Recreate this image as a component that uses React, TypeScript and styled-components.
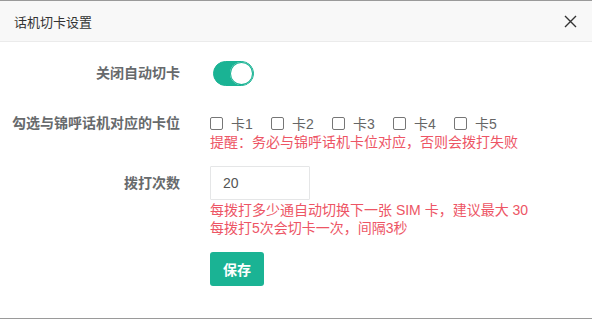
import { useState } from "react";
import styled, { createGlobalStyle } from "styled-components";

const GlobalStyle = createGlobalStyle`
  html, body {
    margin: 0;
    padding: 0;
    background: #fff;
  }
  body {
    font-family: "Liberation Sans", "Noto Sans CJK SC", sans-serif;
  }
`;

const green = "#1ab394";
const danger = "#ed5565";

const Modal = styled.div`
  width: 592px;
  height: 319px;
  box-sizing: border-box;
  border-top: 1px solid #9a9a9a;
  border-bottom: 1px solid #9a9a9a;
  background: #fff;
  display: flex;
  flex-direction: column;
`;

const Header = styled.div`
  height: 41px;
  box-sizing: border-box;
  padding: 0 14px 0 14px;
  display: flex;
  align-items: center;
  justify-content: space-between;
  background: #f8f8f8;
  border-bottom: 1px solid #ebebeb;
`;

const Title = styled.span`
  font-size: 13px;
  color: #333;
`;

const CloseButton = styled.button`
  width: 16px;
  height: 16px;
  padding: 0;
  border: none;
  background: transparent;
  display: flex;
  align-items: center;
  justify-content: center;
  cursor: pointer;
`;

const Body = styled.div`
  padding-top: 15px;
`;

const FormRow = styled.div<{ gap?: number }>`
  display: grid;
  grid-template-columns: 180px 1fr;
  column-gap: 30px;
  margin-bottom: ${({ gap }) => gap ?? 0}px;
`;

const Label = styled.div<{ h: number }>`
  text-align: right;
  font-size: 14px;
  font-weight: bold;
  color: #676a6c;
  height: ${({ h }) => h}px;
  line-height: ${({ h }) => h}px;
`;

const Control = styled.div`
  display: flex;
  flex-direction: column;
  align-items: flex-start;
`;

const SwitchWrap = styled.div`
  height: 32px;
  display: flex;
  align-items: center;
  padding-left: 3px;
`;

const Switch = styled.button<{ on: boolean }>`
  position: relative;
  width: 41px;
  height: 25px;
  padding: 0;
  border-radius: 13px;
  border: 1px solid ${({ on }) => (on ? green : "#dfdfdf")};
  background: ${({ on }) => (on ? green : "#fff")};
  cursor: pointer;

  &::after {
    content: "";
    position: absolute;
    top: 0;
    left: ${({ on }) => (on ? "16px" : "0")};
    width: 23px;
    height: 23px;
    box-sizing: border-box;
    border-radius: 50%;
    background: #fff;
    box-shadow: 0 0 0 1px ${({ on }) => (on ? green : "#dfdfdf")} inset;
  }
`;

const CheckList = styled.div`
  display: flex;
  height: 20px;
  align-items: center;
`;

const CheckItem = styled.label`
  display: flex;
  align-items: center;
  width: 61px;
  font-size: 14px;
  color: #666;
  cursor: pointer;
`;

const Box = styled.span<{ checked: boolean }>`
  width: 13px;
  height: 13px;
  box-sizing: border-box;
  border: 1px solid #767676;
  border-radius: 2px;
  margin-right: 8px;
  background: ${({ checked }) => (checked ? green : "#fff")};
  border-color: ${({ checked }) => (checked ? green : "#767676")};
`;

const Hint = styled.div`
  font-size: 14px;
  line-height: 18px;
  color: ${danger};
`;

const Input = styled.input`
  width: 100px;
  height: 34px;
  box-sizing: border-box;
  border: 1px solid #e5e6e7;
  border-radius: 1px;
  padding: 0 12px;
  font-size: 14px;
  color: #555;
  font-family: "Liberation Sans", "Noto Sans CJK SC", sans-serif;
  outline: none;
  margin-bottom: 1px;
`;

const SaveButton = styled.button`
  width: 54px;
  height: 34px;
  border: none;
  border-radius: 3px;
  background: ${green};
  color: #fff;
  font-size: 14px;
  font-weight: bold;
  font-family: "Liberation Sans", "Noto Sans CJK SC", sans-serif;
  cursor: pointer;
`;

const cards = ["卡1", "卡2", "卡3", "卡4", "卡5"];

const App = () => {
  const [autoOff, setAutoOff] = useState(true);
  const [checked, setChecked] = useState<boolean[]>([false, false, false, false, false]);
  const [count, setCount] = useState("20");

  const toggle = (i: number) => {
    setChecked(checked.map((c, idx) => (idx === i ? !c : c)));
  };

  return (
    <>
      <GlobalStyle />
      <Modal>
        <Header>
          <Title>话机切卡设置</Title>
          <CloseButton>
            <svg width="13" height="13" viewBox="0 0 13 13">
              <path d="M1 1 L12 12 M12 1 L1 12" stroke="#333" strokeWidth="1.4" />
            </svg>
          </CloseButton>
        </Header>
        <Body>
          <FormRow gap={24}>
            <Label h={32}>关闭自动切卡</Label>
            <SwitchWrap>
              <Switch on={autoOff} onClick={() => setAutoOff(!autoOff)} />
            </SwitchWrap>
          </FormRow>
          <FormRow gap={15}>
            <Label h={20}>勾选与锦呼话机对应的卡位</Label>
            <Control>
              <CheckList>
                {cards.map((c, i) => (
                  <CheckItem key={c} onClick={() => toggle(i)}>
                    <Box checked={checked[i]} />
                    {c}
                  </CheckItem>
                ))}
              </CheckList>
              <Hint>提醒：务必与锦呼话机卡位对应，否则会拨打失败</Hint>
            </Control>
          </FormRow>
          <FormRow gap={15}>
            <Label h={34}>拨打次数</Label>
            <Control>
              <Input value={count} onChange={(e) => setCount(e.target.value)} />
              <Hint>每拨打多少通自动切换下一张 SIM 卡，建议最大 30</Hint>
              <Hint>每拨打5次会切卡一次，间隔3秒</Hint>
            </Control>
          </FormRow>
          <FormRow>
            <div />
            <Control>
              <SaveButton>保存</SaveButton>
            </Control>
          </FormRow>
        </Body>
      </Modal>
    </>
  );
};

export default App;
